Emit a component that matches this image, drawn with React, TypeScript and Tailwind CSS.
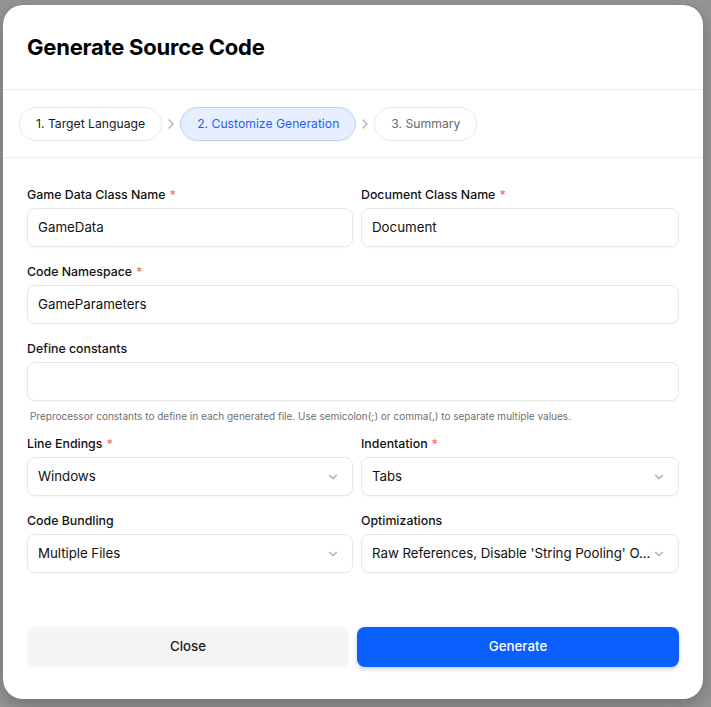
import React from "react";

const Chevron = ({ className = "" }: { className?: string }) => (
  <svg width="16" height="16" viewBox="0 0 24 24" fill="none" stroke="currentColor" strokeWidth="2" strokeLinecap="round" strokeLinejoin="round" className={className}>
    <path d="m9 18 6-6-6-6" />
  </svg>
);

const ChevronDown = () => (
  <svg width="14" height="14" viewBox="0 0 24 24" fill="none" stroke="currentColor" strokeWidth="2" strokeLinecap="round" strokeLinejoin="round" className="shrink-0 text-[#a8a8a8]">
    <path d="m6 9 6 6 6-6" />
  </svg>
);

const Label = ({ text, required }: { text: string; required?: boolean }) => (
  <div className="text-[12.35px] leading-5 font-medium text-[#111111]">
    {text}
    {required && <span className="ml-1 text-[#f87171]">*</span>}
  </div>
);

const inputBox =
  "mt-[3px] h-[39px] rounded-lg border border-[#e8e8e8] bg-white shadow-[0_1px_2px_rgba(0,0,0,0.04)] flex items-center pl-[10px] pr-3 text-[13.3px] text-[#111111]";

const TextField = ({ label, value, required }: { label: string; value: string; required?: boolean }) => (
  <div className="flex flex-col min-w-0">
    <Label text={label} required={required} />
    <div className={inputBox}>
      <span className="whitespace-nowrap">{value}</span>
    </div>
  </div>
);

const SelectField = ({ label, value, required }: { label: string; value: string; required?: boolean }) => (
  <div className="flex flex-col min-w-0">
    <Label text={label} required={required} />
    <div className={inputBox + " justify-between"}>
      <span className="whitespace-nowrap shrink-0 tracking-[-0.003em]">{value}</span>
      <ChevronDown />
    </div>
  </div>
);

export default function App() {
  return (
    <div className="min-h-screen bg-[#959595] pt-[5px] pl-[3px]" style={{ fontFamily: "Inter, 'Noto Sans', sans-serif" }}>
      <div className="w-[700px] rounded-[20px] bg-white shadow-[0_6px_18px_rgba(0,0,0,0.25)] overflow-hidden flex flex-col">
        <div className="h-[85px] flex items-center px-6 border-b border-[#ececec]">
          <h1 className="text-[22px] leading-7 font-bold tracking-[-0.01em] text-black">Generate Source Code</h1>
        </div>
        <div className="flex items-center gap-[1px] px-4 pt-[17px] pb-4 border-b border-[#ececec]">
          <div className="h-[34px] px-4 flex items-center rounded-full border border-[#e8e8e8] text-[12.2px] text-[#1a1a1a]">
            1. Target Language
          </div>
          <Chevron className="text-[#b3b3b3]" />
          <div className="h-[34px] px-4 flex items-center rounded-full border border-[#b9cffb] bg-[#e7effe] text-[12.2px] text-[#1f5ff5]">
            2. Customize Generation
          </div>
          <Chevron className="text-[#b3b3b3]" />
          <div className="h-[34px] px-4 flex items-center rounded-full border border-[#e8e8e8] text-[12.2px] text-[#6b6b6b]">
            3. Summary
          </div>
        </div>
        <div className="flex flex-col px-6 pt-[27px] pb-[30px]">
          <div className="grid grid-cols-[326px_318px] gap-2">
            <TextField label="Game Data Class Name" value="GameData" required />
            <TextField label="Document Class Name" value="Document" required />
          </div>
          <div className="mt-[15px]">
            <TextField label="Code Namespace" value="GameParameters" required />
          </div>
          <div className="mt-[15px]">
            <TextField label="Define constants" value="" />
            <p className="mt-2 px-[3px] text-[10px] leading-[14px] text-[#6f6f6f]">
              Preprocessor constants to define in each generated file. Use semicolon(;) or comma(,) to separate multiple values.
            </p>
          </div>
          <div className="mt-[11px] grid grid-cols-[326px_318px] gap-2">
            <SelectField label="Line Endings" value="Windows" required />
            <SelectField label="Indentation" value="Tabs" required />
          </div>
          <div className="mt-[15px] grid grid-cols-[326px_318px] gap-2">
            <SelectField label="Code Bundling" value="Multiple Files" />
            <SelectField label="Optimizations" value="Raw References, Disable 'String Pooling' O..." />
          </div>
        </div>
        <div className="grid grid-cols-2 gap-2 px-6 pt-6 pb-8">
          <button className="h-10 rounded-lg bg-[#f5f5f5] text-[13.3px] font-medium text-[#1a1a1a]">Close</button>
          <button className="h-10 rounded-lg bg-[#0b5fff] text-[13.3px] font-medium text-white shadow-[0_2px_4px_rgba(0,0,0,0.2)]">Generate</button>
        </div>
      </div>
    </div>
  );
}
